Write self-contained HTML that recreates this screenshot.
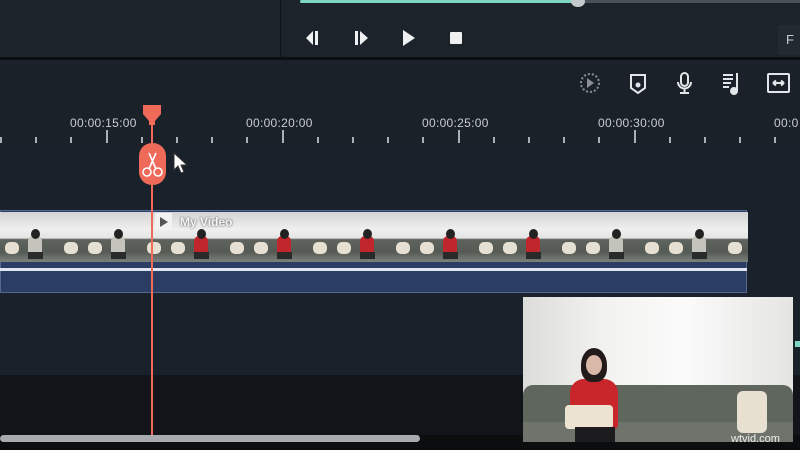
<!DOCTYPE html>
<html><head><style>
*{margin:0;padding:0;box-sizing:border-box}
body{width:800px;height:450px;overflow:hidden;background:#1a2128;font-family:"Liberation Sans",sans-serif;position:relative}
.a{position:absolute}
.tc{color:#c9ced3;font-size:12px;letter-spacing:0.3px}
.tick{position:absolute;top:137px;width:2px;height:6px;background:#aab0b6}
.big{top:130px;height:13px}
.thumb{position:absolute;top:212px;height:50px;width:84px;background:linear-gradient(#d4d4d4 0,#efefef 35%,#e4e4e4 52%,#5e635d 55%,#555a54 80%,#7d817b 100%)}
</style></head><body>
<div class="a" style="left:0;top:0;width:280px;height:57px;background:#1c232a"></div>
<div class="a" style="left:280px;top:0;width:520px;height:57px;background:#1c232a;border-left:1px solid #0e1215"></div>
<div class="a" style="left:300px;top:0;width:280px;height:3px;background:#7fd6c0;border-radius:2px"></div>
<div class="a" style="left:580px;top:0;width:220px;height:3px;background:#4a5157"></div>
<div class="a" style="left:571px;top:-4px;width:14px;height:11px;border-radius:50%;background:#c6c9cc"></div>
<svg class="a" style="left:300px;top:28px" width="180" height="20" fill="#eef0f2">
<path d="M13 3 L13 17 L6 10Z M15 3h3v14h-3z"/>
<path d="M55 3h3v14h-3z M60 3 L68 10 L60 17Z"/>
<path d="M103 2 L115 10 L103 18Z"/>
<rect x="150" y="4" width="12" height="12" rx="1"/>
</svg>
<div class="a" style="left:778px;top:25px;width:22px;height:30px;background:#222a31;color:#ccc;font-size:13px;padding:7px 0 0 8px">F</div>
<div class="a" style="left:0;top:57px;width:800px;height:3px;background:#0c0f12"></div>
<svg class="a" style="left:575px;top:68px" width="225" height="32" fill="none" stroke="#e3e6e8" stroke-width="2">
<circle cx="15" cy="15" r="9" stroke="#8a9096" stroke-dasharray="2 2"/><path d="M12 10l7 5-7 5z" fill="#8a9096" stroke="none"/>
<path d="M56 7h14v13l-7 5-7-5z"/><circle cx="63" cy="17" r="1.5" fill="#e3e6e8"/>
<rect x="106" y="5" width="7" height="13" rx="3.5"/><path d="M103 14a6.5 6.5 0 0 0 13 0M109.5 21v4M105 25h9"/>
<path d="M148 7h10M148 11h10M148 15h8M148 19h6M162 5v18"/><circle cx="159" cy="23" r="3" fill="#e3e6e8"/>
<rect x="193" y="6" width="21" height="18" rx="1"/><path d="M198 15h11M198 15l3-2.5M198 15l3 2.5M209 15l-3-2.5M209 15l-3 2.5"/>
</svg>
<div class="a tc" style="left:70px;top:116px">00:00:15:00</div>
<div class="a tc" style="left:246px;top:116px">00:00:20:00</div>
<div class="a tc" style="left:422px;top:116px">00:00:25:00</div>
<div class="a tc" style="left:598px;top:116px">00:00:30:00</div>
<div class="a tc" style="left:774px;top:116px">00:0</div>
<div id="ticks"></div>
<script>
var h='';for(var i=0;i<24;i++){var x=i*35.2;var b=(i%5)==3;h+='<div class="tick'+(b?' big':'')+'" style="left:'+Math.round(x)+'px"></div>';}
document.getElementById('ticks').innerHTML=h;
</script>
<div class="a" style="left:0;top:150px;width:800px;height:225px;background:#19212a"></div>
<div class="a" style="left:0;top:375px;width:800px;height:60px;background:#111519"></div>
<div class="a" style="left:0;top:435px;width:800px;height:15px;background:#0b0d0f"></div>
<div class="a" style="left:0;top:435px;width:420px;height:7px;background:#a7abae;border-radius:4px"></div>
<div class="a" style="left:0;top:210px;width:747px;height:83px;background:#2b3d63;border:1px solid #56688e"></div>
<div id="th"></div>
<script>
var t='';for(var i=0;i<9;i++){var r=!(i<2||i>6);t+='<div class="thumb" style="left:'+(i*83)+'px"><div style="position:absolute;left:28px;top:24px;width:14px;height:20px;background:'+(r?'#c0262b':'#c4c4bc')+';border-radius:5px 5px 2px 2px"></div><div style="position:absolute;left:31px;top:17px;width:9px;height:10px;border-radius:50%;background:#222"></div><div style="position:absolute;left:28px;top:40px;width:15px;height:7px;background:#2a2a2a"></div><div style="position:absolute;left:5px;top:30px;width:14px;height:12px;border-radius:5px;background:#e6e0d2"></div><div style="position:absolute;left:64px;top:30px;width:14px;height:12px;border-radius:5px;background:#e6e0d2"></div></div>';}
document.getElementById('th').innerHTML=t;
</script>
<div class="a" style="left:0;top:268px;width:747px;height:3px;background:#dfe6f2"></div>
<div class="a" style="left:155px;top:213px;width:17px;height:17px;background:#f2f2f2"></div>
<svg class="a" style="left:158px;top:216px" width="12" height="12"><path d="M2 1l8 5-8 5z" fill="#555"/></svg>
<div class="a" style="left:180px;top:215px;color:#f3f3f3;font-size:12px;font-weight:bold;text-shadow:0 0 2px #444">My Video</div>
<div class="a" style="left:151px;top:118px;width:2px;height:317px;background:#f06a5a"></div>
<svg class="a" style="left:143px;top:105px" width="18" height="20"><path d="M0 0h18v9l-6 7v4h-6v-4l-6-7z" fill="#f06a5a"/></svg>
<div class="a" style="left:139px;top:143px;width:27px;height:42px;border-radius:13px;background:#f06a5a"></div>
<svg class="a" style="left:139px;top:143px" width="27" height="42" fill="none" stroke="#fff" stroke-width="1.6"><circle cx="8" cy="29" r="4"/><circle cx="19" cy="29" r="4"/><path d="M10 26L17 10M17 26L10 10"/></svg>
<svg class="a" style="left:173px;top:152px" width="16" height="22"><path d="M1 1v17l4-4 3 7 3-1-3-7h6z" fill="#fff" stroke="#333" stroke-width="1"/></svg>
<div class="a" style="left:523px;top:297px;width:270px;height:145px;background:linear-gradient(90deg,#dcdcda,#f2f2f0 30%,#fbfbfb 60%,#e4e4e2);overflow:hidden">
<div class="a" style="left:0;top:88px;width:270px;height:57px;background:#5f665d;border-radius:10px 10px 0 0"></div>
<div class="a" style="left:0;top:125px;width:270px;height:20px;background:#6e746c"></div>
<div class="a" style="left:47px;top:82px;width:48px;height:50px;background:#c8262b;border-radius:14px 14px 4px 4px"></div>
<div class="a" style="left:58px;top:51px;width:26px;height:34px;background:#231a1a;border-radius:50% 50% 40% 40%"></div>
<div class="a" style="left:63px;top:58px;width:16px;height:20px;background:#d9b8a8;border-radius:50%"></div>
<div class="a" style="left:42px;top:108px;width:48px;height:24px;background:#ece4d0;border-radius:4px"></div>
<div class="a" style="left:52px;top:130px;width:40px;height:15px;background:#1c1c1e"></div>
<div class="a" style="left:214px;top:94px;width:30px;height:42px;background:#e8e0d0;border-radius:6px"></div>
<div class="a" style="left:208px;top:136px;color:#eee;font-size:11px">wtvid.com</div>
</div>
<div class="a" style="left:795px;top:341px;width:5px;height:6px;background:#7fd6c0"></div>
</body></html>
